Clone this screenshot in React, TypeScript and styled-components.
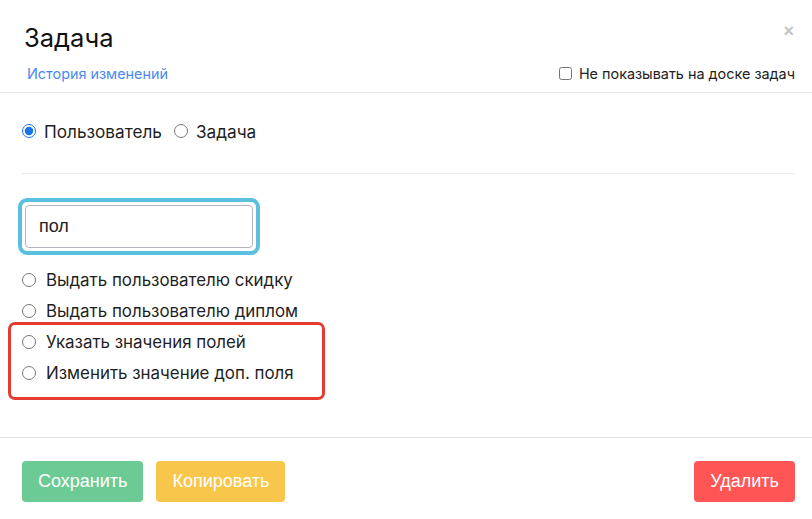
import React, { useState } from 'react'
import styled, { createGlobalStyle } from 'styled-components'

const GlobalStyle = createGlobalStyle`
    html, body {
        margin: 0;
        padding: 0;
        background: #ffffff;
    }
    body {
        font-family: Inter, "Noto Sans", sans-serif;
        color: #1f1f1f;
    }
`;

const Modal = styled.div`
    width: 812px;
    height: 519px;
    background: #fff;
    display: flex;
    flex-direction: column;
`;

const Header = styled.div`
    padding: 22px 17px 0 24px;
    border-bottom: 1px solid #e3e3e3;
`;

const TitleRow = styled.div`
    display: flex;
    justify-content: space-between;
    align-items: flex-start;
`;

const Title = styled.h1`
    margin: 0;
    font-size: 25.5px;
    font-weight: 400;
    line-height: 32px;
    color: #111;
`;

const Close = styled.button`
    border: none;
    background: none;
    padding: 0;
    margin: 0 1px 0 0;
    color: #c4c4c4;
    font-size: 18px;
    font-weight: 700;
    line-height: 18px;
    font-family: "Liberation Sans", Arial, sans-serif;
    cursor: pointer;
`;

const SubRow = styled.div`
    display: flex;
    justify-content: space-between;
    align-items: center;
    margin-top: 11px;
    padding-bottom: 10px;
`;

const HistoryLink = styled.a`
    margin-left: 3px;
    color: #4a8af0;
    font-size: 14.4px;
    text-decoration: none;
`;

const CheckLabel = styled.label`
    display: flex;
    align-items: center;
    gap: 7px;
    font-size: 14.4px;
    color: #222;
`;

const Box = styled.input`
    margin: 0;
    width: 13px;
    height: 13px;
`;

const Body = styled.div`
    padding: 0 17px 0 22px;
    flex: 1;
`;

const ScopeRow = styled.div`
    display: flex;
    align-items: center;
    margin-top: 28px;
    height: 20px;
    font-size: 17.2px;
`;

const ScopeLabel = styled.label`
    display: flex;
    align-items: center;
    gap: 8px;
    margin-right: 12px;
`;

const Radio = styled.input`
    margin: 0;
    width: 14px;
    height: 14px;
    accent-color: #1a73e8;
`;

const Rule = styled.div`
    height: 1px;
    background: #ececec;
    margin-top: 32px;
`;

const FocusRing = styled.div`
    margin: 24px 0 0 -4px;
    width: 242px;
    height: 57px;
    box-sizing: border-box;
    border: 4px solid #5bc0de;
    border-radius: 9px;
    padding: 3px;
`;

const SearchInput = styled.input`
    width: 100%;
    height: 100%;
    box-sizing: border-box;
    border: 1px solid #b3b3bd;
    border-radius: 4px;
    padding: 0 13px;
    font-size: 18px;
    font-family: "Liberation Sans", Arial, sans-serif;
    color: #222;
    outline: none;
    caret-color: #000;
`;

const Options = styled.div`
    margin-top: 9px;
`;

const Option = styled.label`
    display: flex;
    align-items: center;
    gap: 10px;
    height: 31px;
    font-size: 16.9px;
    color: #1f1f1f;
`;

const Highlight = styled.div`
    margin: -4px 0 0 -14px;
    width: 317px;
    box-sizing: border-box;
    border: 3px solid #e53a30;
    border-radius: 7px;
    padding: 1px 0 9px 11px;
`;

const Footer = styled.div`
    border-top: 1px solid #e3e3e3;
    padding: 23px 17px 17px 22px;
    display: flex;
    align-items: center;
    gap: 13px;
`;

const Button = styled.button<{ $bg: string }>`
    height: 41px;
    border: none;
    border-radius: 4px;
    padding: 0 16px;
    background: ${p => p.$bg};
    color: #fff;
    font-size: 18px;
    font-family: "Liberation Sans", Arial, sans-serif;
    cursor: pointer;
`;

const Spacer = styled.div`
    flex: 1;
`;

const actions = [
    'Выдать пользователю скидку',
    'Выдать пользователю диплом',
];

const highlighted = [
    'Указать значения полей',
    'Изменить значение доп. поля',
];

const App = () => {
    const [scope, setScope] = useState('user');
    const [query, setQuery] = useState('пол');

    return (
        <Modal>
            <GlobalStyle />
            <Header>
                <TitleRow>
                    <Title>Задача</Title>
                    <Close>×</Close>
                </TitleRow>
                <SubRow>
                    <HistoryLink href="#">История изменений</HistoryLink>
                    <CheckLabel>
                        <Box type="checkbox" />
                        Не показывать на доске задач
                    </CheckLabel>
                </SubRow>
            </Header>
            <Body>
                <ScopeRow>
                    <ScopeLabel>
                        <Radio type="radio" name="scope" checked={scope === 'user'} onChange={() => setScope('user')} />
                        Пользователь
                    </ScopeLabel>
                    <ScopeLabel>
                        <Radio type="radio" name="scope" checked={scope === 'task'} onChange={() => setScope('task')} />
                        Задача
                    </ScopeLabel>
                </ScopeRow>
                <Rule />
                <FocusRing>
                    <SearchInput value={query} onChange={e => setQuery(e.target.value)} autoFocus />
                </FocusRing>
                <Options>
                    {actions.map(a => (
                        <Option key={a}>
                            <Radio type="radio" name="action" />
                            {a}
                        </Option>
                    ))}
                    <Highlight>
                        {highlighted.map(a => (
                            <Option key={a}>
                                <Radio type="radio" name="action" />
                                {a}
                            </Option>
                        ))}
                    </Highlight>
                </Options>
            </Body>
            <Footer>
                <Button $bg="#6ccb94">Сохранить</Button>
                <Button $bg="#f7c64b">Копировать</Button>
                <Spacer />
                <Button $bg="#ff5555">Удалить</Button>
            </Footer>
        </Modal>
    )
}

export default App;
